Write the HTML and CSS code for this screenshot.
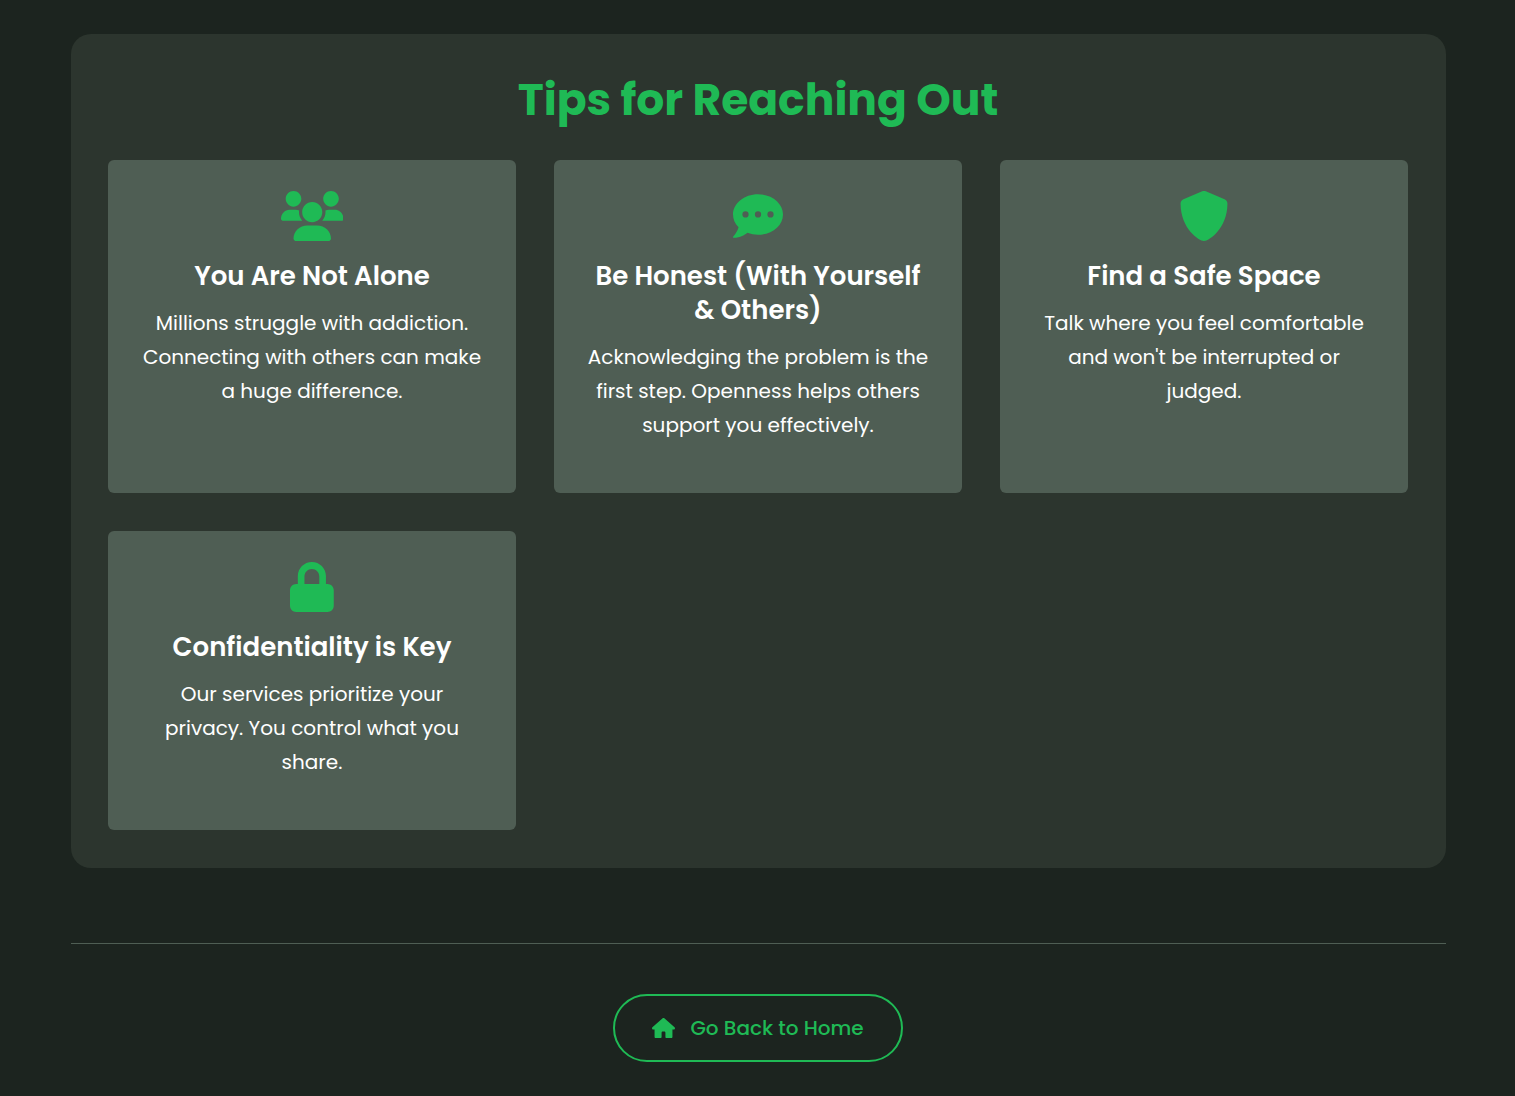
FILE: index.html
```html
<!DOCTYPE html>
<html lang="en">
<head>
<meta charset="utf-8">
<title>Tips for Reaching Out</title>
<link rel="stylesheet" href="styles.css">
</head>
<body>
<main class="page">
  <section class="tips">
    <h2 class="tips-title">Tips for Reaching Out</h2>
    <div class="tips-grid">
      <article class="card">
        <svg class="icon" viewBox="0 0 640 512"><path d="M319.9 320c57.41 0 103.1-46.56 103.1-104c0-57.44-46.54-104-103.1-104c-57.41 0-103.1 46.56-103.1 104C215.9 273.4 262.5 320 319.9 320zM369.9 352H270.1C191.6 352 128 411.7 128 485.3C128 500.1 140.7 512 156.4 512h327.2C499.3 512 512 500.1 512 485.3C512 411.7 448.4 352 369.9 352zM512 160c44.18 0 80-35.82 80-80S556.2 0 512 0c-44.18 0-80 35.82-80 80S467.8 160 512 160zM183.9 216c0-5.449 .9824-10.63 1.609-15.91C174.6 194.1 162.6 192 149.9 192H88.08C39.44 192 0 233.8 0 285.3C0 295.6 7.887 304 17.62 304h199.5C196.7 280.2 183.9 249.7 183.9 216zM128 160c44.18 0 80-35.82 80-80S172.2 0 128 0C83.82 0 48 35.82 48 80S83.82 160 128 160zM551.9 192h-61.84c-12.8 0-24.88 3.037-35.86 8.24C454.8 205.5 455.8 210.6 455.8 216c0 33.71-12.78 64.21-33.16 88h199.7C632.1 304 640 295.6 640 285.3C640 233.8 600.6 192 551.9 192z"/></svg>
        <h3 class="card-title">You Are Not Alone</h3>
        <p class="card-text">Millions struggle with addiction.<br>Connecting with others can make<br>a huge difference.</p>
      </article>
      <article class="card">
        <svg class="icon" viewBox="0 0 512 512"><path d="M256 32C114.6 32 0 125.1 0 240c0 49.62 21.35 94.98 56.97 130.7c-12.5 50.37-54.27 95.27-54.77 95.77c-2.25 2.25-2.875 5.734-1.5 8.734c1.249 3 4.021 4.766 7.271 4.766c66.25 0 115.1-31.76 140.6-51.39C181.2 440.9 217.6 448 256 448c141.4 0 256-93.13 256-208S397.4 32 256 32zM128 208a32 32 0 1 1 0 64 32 32 0 1 1 0-64zm128 0a32 32 0 1 1 0 64 32 32 0 1 1 0-64zm96 32a32 32 0 1 1 64 0 32 32 0 1 1 -64 0z"/></svg>
        <h3 class="card-title">Be Honest (With Yourself<br>&amp; Others)</h3>
        <p class="card-text">Acknowledging the problem is the<br>first step. Openness helps others<br>support you effectively.</p>
      </article>
      <article class="card">
        <svg class="icon" viewBox="0 0 512 512"><path d="M496 128C496 381.3 309.1 512 256 512C204.9 512 16 385.3 16 128c0-19.41 11.7-36.89 29.61-44.28l192-80.01C242.5 1.67 250.7 0 256 0c5.281 0 13.58 1.67 18.46 3.701l192 80.01C484.3 91.1 496 108.6 496 128z"/></svg>
        <h3 class="card-title">Find a Safe Space</h3>
        <p class="card-text">Talk where you feel comfortable<br>and won't be interrupted or<br>judged.</p>
      </article>
      <article class="card">
        <svg class="icon" viewBox="0 0 448 512"><path d="M80 224V144C80 64.5 144.5 0 224 0s144 64.5 144 144v80h16c35.3 0 64 28.7 64 64V448c0 35.3-28.7 64-64 64H64c-35.3 0-64-28.7-64-64V288c0-35.3 28.7-64 64-64H80zM148 224H300V148c0-42-34-76-76-76s-76 34-76 76z"/></svg>
        <h3 class="card-title">Confidentiality is Key</h3>
        <p class="card-text">Our services prioritize your<br>privacy. You control what you<br>share.</p>
      </article>
    </div>
  </section>
  <footer class="footer">
    <a class="home-button" href="#"><svg class="home-icon" viewBox="0 0 576 512"><path d="M575.8 255.5c0 18-15 32.1-32 32.1h-32l.7 160.2c0 2.7-.2 5.4-.5 8.1V472c0 22.1-17.9 40-40 40H376c-22.1 0-40-17.9-40-40V368c0-17.7-14.3-32-32-32H272c-17.7 0-32 14.3-32 32v104c0 22.1-17.9 40-40 40H104c-22.1 0-40-17.9-40-40V287.6H32c-18 0-32-14-32-32.1c0-9 3-17 10-24L266.4 8c7-7 15-8 22-8s15 2 21 7L564.8 231.5c8 7 12 15 11 24z"/></svg><span>Go Back to Home</span></a>
  </footer>
</main>
</body>
</html>
```
FILE: styles.css
```css
* { box-sizing: border-box; }
body {
  margin: 0;
  min-height: 1096px;
  background: #1c241f;
  color: #fff;
  font: 400 20px/34px Poppins, Inter, sans-serif;
}
.page { padding: 34px 69px 34px 71px; }
.tips {
  padding: 38px 38px 38px 37px;
  border-radius: 20px;
  background: #2c352e;
}
.tips-title {
  margin: 0 0 32px;
  color: #1fba55;
  font-size: 44px;
  line-height: 56px;
  font-weight: 700;
  text-align: center;
}
.tips-grid {
  display: grid;
  grid-template-columns: repeat(3, 1fr);
  gap: 38px;
}
.card {
  padding: 31px 20px 51px;
  border-radius: 6px;
  background: #4f5e54;
  text-align: center;
}
.icon {
  display: block;
  height: 50px;
  margin: 0 auto 18px;
  fill: #1fba55;
}
.card-title {
  margin: 0 0 13px;
  font-size: 26px;
  line-height: 34px;
  font-weight: 600;
}
.card-text { margin: 0; white-space: nowrap; }
.footer {
  display: flex;
  justify-content: center;
  margin-top: 75px;
  padding: 50px 1px 0 0;
  border-top: 1px solid #4f5e54;
}
.home-button {
  display: flex;
  align-items: center;
  justify-content: center;
  gap: 15px;
  width: 290px;
  height: 68px;
  border: 2px solid #1fba55;
  border-radius: 38px;
  color: #1fba55;
  font-weight: 500;
  text-decoration: none;
}
.home-icon { width: 23px; height: 20.5px; fill: currentColor; }
```
